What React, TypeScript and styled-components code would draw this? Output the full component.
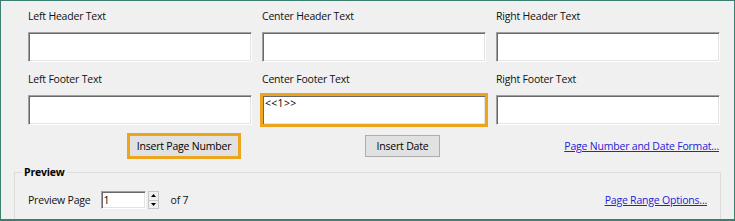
import React from 'react';
import styled, { createGlobalStyle } from 'styled-components';

const Global = createGlobalStyle`
  html, body { margin: 0; padding: 0; background: #f0f0f0; }
  * { box-sizing: border-box; }
`;

const HIGHLIGHT = '#eca51c';
const FONT = `"Open Sans", "Noto Sans", sans-serif`;

const Frame = styled.div`
  width: 735px;
  height: 221px;
  border: 1px solid #3c7f70;
  border-bottom-width: 2px;
  background: #f0f0f0;
  overflow: hidden;
  font-family: ${FONT};
  font-size: 10.5px;
  letter-spacing: -0.2px;
  color: #111;
  display: flex;
  flex-direction: column;
`;

const Fields = styled.div`
  display: grid;
  grid-template-columns: repeat(3, 224px);
  column-gap: 10px;
  row-gap: 10px;
  padding: 8px 0 0 27px;
`;

const Field = styled.div`
  display: flex;
  flex-direction: column;
  gap: 8px;
`;

const Label = styled.label`
  line-height: 15px;
  height: 15px;
  white-space: nowrap;
`;

const TextBox = styled.textarea<{ $highlight?: boolean }>`
  width: 224px;
  height: 30px;
  margin: 0;
  padding: 0 2px;
  resize: none;
  overflow: hidden;
  font-family: ${FONT};
  font-size: 10.5px;
  letter-spacing: 0.3px;
  line-height: 14px;
  color: #000;
  background: #fff;
  border: 1px solid;
  border-color: #a0a0a0 #ffffff #ffffff #a0a0a0;
  box-shadow: inset 1px 1px 0 #696969, inset -1px -1px 0 #e3e3e3;
  outline: ${p => (p.$highlight ? `3px solid ${HIGHLIGHT}` : 'none')};
  outline-offset: -1px;
`;

const ButtonRow = styled.div`
  display: flex;
  align-items: center;
  height: 22px;
  margin-top: 10px;
  padding: 0 15px 0 128px;
`;

const Button = styled.button<{ $width: number; $gap?: number; $highlight?: boolean }>`
  width: ${p => p.$width}px;
  height: 22px;
  margin: 0 0 0 ${p => p.$gap ?? 0}px;
  padding: 0;
  font-family: ${FONT};
  font-size: 10.5px;
  letter-spacing: -0.2px;
  color: #000;
  background: #e1e1e1;
  border: 1px solid #adadad;
  outline: ${p => (p.$highlight ? `3px solid ${HIGHLIGHT}` : 'none')};
  outline-offset: -1px;
`;

const Link = styled.a`
  margin-left: auto;
  color: #2323d4;
  text-decoration: underline;
  white-space: nowrap;
  cursor: pointer;
`;

const Group = styled.fieldset`
  margin: 9px 13px 0 13px;
  padding: 0 13px 0 13px;
  border: 1px solid #dcdcdc;
  min-height: 80px;
  min-width: 0;
`;

const Legend = styled.legend`
  margin-left: -6px;
  padding: 0 2px;
  font-weight: 700;
  line-height: 13px;
  color: #000;
`;

const PreviewRow = styled.div`
  display: flex;
  align-items: center;
  height: 18px;
  margin-top: 12px;
`;

const RowText = styled.span<{ $gap?: number }>`
  margin-left: ${p => p.$gap ?? 0}px;
  white-space: nowrap;
`;

const SpinInput = styled.input`
  width: 45px;
  height: 18px;
  margin: 0 0 0 10px;
  padding: 0 2px;
  font-family: ${FONT};
  font-size: 10.5px;
  color: #000;
  background: #fff;
  border: 1px solid;
  border-color: #a0a0a0 #ffffff #ffffff #a0a0a0;
  box-shadow: inset 1px 1px 0 #696969, inset -1px -1px 0 #e3e3e3;
  outline: none;
`;

const Spinner = styled.div`
  display: flex;
  flex-direction: column;
  width: 11px;
  height: 18px;
  margin-left: 2px;
`;

const SpinButton = styled.div`
  flex: 1;
  display: flex;
  align-items: center;
  justify-content: center;
  background: #f0f0f0;
  border: 1px solid #c8c8c8;
  & + & { border-top: none; }
`;

const Arrow = ({ up }: { up?: boolean }) => (
  <svg width="5" height="3" viewBox="0 0 5 3">
    <polygon points={up ? '0,3 5,3 2.5,0' : '0,0 5,0 2.5,3'} fill="#000" />
  </svg>
);

export default function App() {
  return (
    <>
      <Global />
      <Frame>
        <Fields>
          <Field>
            <Label>Left Header Text</Label>
            <TextBox readOnly value="" />
          </Field>
          <Field>
            <Label>Center Header Text</Label>
            <TextBox readOnly value="" />
          </Field>
          <Field>
            <Label>Right Header Text</Label>
            <TextBox readOnly value="" />
          </Field>
          <Field>
            <Label>Left Footer Text</Label>
            <TextBox readOnly value="" />
          </Field>
          <Field>
            <Label>Center Footer Text</Label>
            <TextBox readOnly value="<<1>>" $highlight />
          </Field>
          <Field>
            <Label>Right Footer Text</Label>
            <TextBox readOnly value="" />
          </Field>
        </Fields>
        <ButtonRow>
          <Button $width={110} $highlight>Insert Page Number</Button>
          <Button $width={75} $gap={126}>Insert Date</Button>
          <Link>Page Number and Date Format...</Link>
        </ButtonRow>
        <Group>
          <Legend>Preview</Legend>
          <PreviewRow>
            <RowText>Preview Page</RowText>
            <SpinInput readOnly value="1" />
            <Spinner>
              <SpinButton><Arrow up /></SpinButton>
              <SpinButton><Arrow /></SpinButton>
            </Spinner>
            <RowText $gap={12}>of 7</RowText>
            <Link>Page Range Options...</Link>
          </PreviewRow>
        </Group>
      </Frame>
    </>
  );
}
